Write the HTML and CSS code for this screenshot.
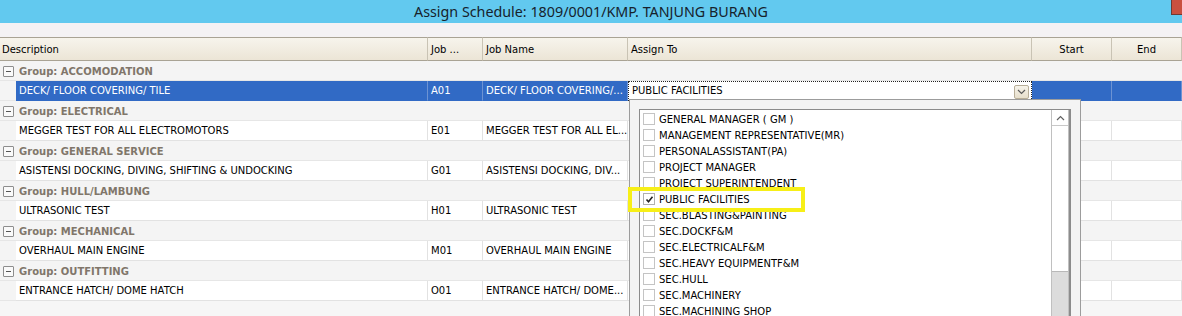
FILE: index.html
```html
<!DOCTYPE html>
<html lang="en">
<head>
  <meta charset="UTF-8">
  <meta name="viewport" content="width=device-width, initial-scale=1.0">
  <title>Assign Schedule</title>
  <link rel="stylesheet" href="styles.css">
</head>
<body>
  <div class="window">
    <div class="titlebar">
      <span class="title">Assign Schedule: 1809/0001/KMP. TANJUNG BURANG</span>
      <span class="close"></span>
    </div>
    <div class="band"></div>

    <div class="grid">
      <div class="hd hd-desc">Description</div>
      <div class="hd">Job ...</div>
      <div class="hd">Job Name</div>
      <div class="hd">Assign To</div>
      <div class="hd center">Start</div>
      <div class="hd center">End</div>

      <div class="group"><span class="minus"></span>Group: ACCOMODATION</div>
      <div class="indent"></div>
      <div class="cell sel">DECK/ FLOOR COVERING/ TILE</div>
      <div class="cell sel">A01</div>
      <div class="cell sel">DECK/ FLOOR COVERING/...</div>
      <div class="cell editor">PUBLIC FACILITIES<span class="drop"><svg width="9" height="6" viewBox="0 0 9 6"><path d="M1 1 L4.5 4.5 L8 1" fill="none" stroke="#5a5a5a" stroke-width="1.2"/></svg></span></div>
      <div class="cell sel"></div>
      <div class="cell sel"></div>

      <div class="group"><span class="minus"></span>Group: ELECTRICAL</div>
      <div class="indent"></div>
      <div class="cell">MEGGER TEST FOR ALL ELECTROMOTORS</div>
      <div class="cell">E01</div>
      <div class="cell">MEGGER TEST FOR ALL EL...</div>
      <div class="cell"></div>
      <div class="cell"></div>
      <div class="cell"></div>

      <div class="group"><span class="minus"></span>Group: GENERAL SERVICE</div>
      <div class="indent"></div>
      <div class="cell">ASISTENSI DOCKING, DIVING, SHIFTING &amp; UNDOCKING</div>
      <div class="cell">G01</div>
      <div class="cell">ASISTENSI DOCKING, DIV...</div>
      <div class="cell"></div>
      <div class="cell"></div>
      <div class="cell"></div>

      <div class="group"><span class="minus"></span>Group: HULL/LAMBUNG</div>
      <div class="indent"></div>
      <div class="cell">ULTRASONIC TEST</div>
      <div class="cell">H01</div>
      <div class="cell">ULTRASONIC TEST</div>
      <div class="cell"></div>
      <div class="cell"></div>
      <div class="cell"></div>

      <div class="group"><span class="minus"></span>Group: MECHANICAL</div>
      <div class="indent"></div>
      <div class="cell">OVERHAUL MAIN ENGINE</div>
      <div class="cell">M01</div>
      <div class="cell">OVERHAUL MAIN ENGINE</div>
      <div class="cell"></div>
      <div class="cell"></div>
      <div class="cell"></div>

      <div class="group"><span class="minus"></span>Group: OUTFITTING</div>
      <div class="indent"></div>
      <div class="cell">ENTRANCE HATCH/ DOME HATCH</div>
      <div class="cell">O01</div>
      <div class="cell">ENTRANCE HATCH/ DOME...</div>
      <div class="cell"></div>
      <div class="cell"></div>
      <div class="cell"></div>
    </div>

    <div class="popup">
      <div class="list">
        <div class="items">
          <div class="item"><span class="box"></span>GENERAL MANAGER ( GM )</div>
          <div class="item"><span class="box"></span>MANAGEMENT REPRESENTATIVE(MR)</div>
          <div class="item"><span class="box"></span>PERSONALASSISTANT(PA)</div>
          <div class="item"><span class="box"></span>PROJECT MANAGER</div>
          <div class="item"><span class="box"></span>PROJECT SUPERINTENDENT</div>
          <div class="item"><span class="box checked"><svg width="9" height="9" viewBox="0 0 9 9"><path d="M1.5 4.5 L3.5 6.8 L7.5 1.8" fill="none" stroke="#222" stroke-width="1.6"/></svg></span>PUBLIC FACILITIES</div>
          <div class="item"><span class="box"></span>SEC.BLASTING&amp;PAINTING</div>
          <div class="item"><span class="box"></span>SEC.DOCKF&amp;M</div>
          <div class="item"><span class="box"></span>SEC.ELECTRICALF&amp;M</div>
          <div class="item"><span class="box"></span>SEC.HEAVY EQUIPMENTF&amp;M</div>
          <div class="item"><span class="box"></span>SEC.HULL</div>
          <div class="item"><span class="box"></span>SEC.MACHINERY</div>
          <div class="item"><span class="box"></span>SEC.MACHINING SHOP</div>
        </div>
        <div class="scrollbar">
          <div class="arrow"><svg width="9" height="6" viewBox="0 0 9 6"><path d="M1 5 L4.5 1.5 L8 5" fill="none" stroke="#606060" stroke-width="1.2"/></svg></div>
          <div class="track"></div>
          <div class="thumb"></div>
        </div>
      </div>
    </div>

    <div class="mark"></div>
  </div>
</body>
</html>
```

FILE: styles.css
```css
body {
  margin: 0;
  padding: 0;
  font-family: "DejaVu Sans", Verdana, sans-serif;
  font-size: 10px;
  background-color: #f6f6f6;
  overflow: hidden;
}
.window {
  position: relative;
  width: 1182px;
  height: 316px;
  overflow: hidden;
  background: #f6f6f6;
}
.titlebar {
  height: 23px;
  background: #62c9ef;
  display: flex;
  justify-content: center;
  align-items: center;
}
.title {
  font-family: "Noto Sans", sans-serif;
  font-size: 14.3px;
  color: #16222c;
  padding-bottom: 1px;
}
.close {
  position: absolute;
  top: 0;
  right: -4px;
  width: 13px;
  height: 14px;
  background: #c9503f;
  border: 1px solid #6e3a34;
  border-top: none;
}
.band {
  height: 14px;
  background: #f4f2f4;
}
.grid {
  display: grid;
  grid-template-columns: 16px 412px 55px 145px 404px 80px 70px;
  grid-template-rows: 24px;
  grid-auto-rows: 20px;
}
.hd {
  line-height: 22px;
  padding-left: 3px;
  padding-top: 1px;
  background: linear-gradient(#f7f4ec, #ece5d6);
  border-top: 1px solid #a9a394;
  border-bottom: 1px solid #a9a394;
  border-right: 1px solid #c9c3b4;
  color: #000;
  white-space: nowrap;
  overflow: hidden;
}
.hd-desc {
  grid-column: 1 / 3;
  padding-left: 2px;
}
.center {
  text-align: center;
  padding-left: 0;
}
.group {
  grid-column: 1 / -1;
  display: flex;
  align-items: center;
  gap: 5px;
  padding-left: 3px;
  padding-top: 1px;
  background: #f4f4f4;
  border-bottom: 1px solid #e6e6e6;
  font-weight: bold;
  color: #80766a;
}
.minus {
  width: 9px;
  height: 9px;
  border: 1px solid #8d8d8d;
  border-radius: 1px;
  background: #fafafa;
  position: relative;
}
.minus::after {
  content: "";
  position: absolute;
  left: 2px;
  top: 4px;
  width: 5px;
  height: 1px;
  background: #555;
}
.indent {
  background: #f4f4f4;
  border-bottom: 1px solid #e6e6e6;
}
.cell {
  background: #fff;
  border-right: 1px solid #e2e2e2;
  border-bottom: 1px solid #e2e2e2;
  padding-left: 3px;
  padding-top: 1px;
  line-height: 18px;
  color: #000;
  white-space: nowrap;
  overflow: hidden;
}
.sel {
  background: #316ac5;
  color: #fff;
  border-right-color: #6d93d3;
  border-bottom-color: #316ac5;
}
.editor {
  position: relative;
  border: 1px dotted #222;
  line-height: 17px;
  padding-top: 0;
  padding-left: 3px;
}
.drop {
  position: absolute;
  right: 2px;
  top: 3px;
  width: 13px;
  height: 12px;
  border: 1px solid #b8ae98;
  border-radius: 2px;
  background: linear-gradient(#f6f3ea, #e7dfcc);
  display: flex;
  align-items: center;
  justify-content: center;
}
.popup {
  position: absolute;
  left: 629px;
  top: 99px;
  width: 432px;
  height: 230px;
  padding: 9px 9px 0 9px;
  background: #f4f4f4;
  border: 1px solid #9c9c9c;
}
.list {
  display: flex;
  height: 100%;
  background: #fff;
  border: 1px solid #8c8c8c;
  border-right-width: 2px;
}
.items {
  flex: 1;
  padding-top: 1px;
}
.item {
  height: 16px;
  display: flex;
  align-items: center;
  gap: 4px;
  padding-left: 3px;
  color: #000;
  white-space: nowrap;
}
.box {
  width: 10px;
  height: 10px;
  border: 1px solid #c4c4c4;
  background: #fff;
  display: flex;
  align-items: center;
  justify-content: center;
}
.box.checked {
  border-color: #b0b0b0;
}
.scrollbar {
  width: 16px;
  display: flex;
  flex-direction: column;
  border-left: 1px solid #c0c0c0;
  border-right: 1px solid #c0c0c0;
  background: #fff;
}
.arrow {
  height: 15px;
  border-bottom: 1px solid #c8c8c8;
  display: flex;
  align-items: center;
  justify-content: center;
}
.track {
  height: 145px;
}
.thumb {
  flex: 1;
  background: #dcdcdc;
  border-top: 1px solid #b8b8b8;
}
.mark {
  position: absolute;
  left: 628px;
  top: 187px;
  width: 169px;
  height: 17px;
  border: 4px solid #f7ef17;
}
```
